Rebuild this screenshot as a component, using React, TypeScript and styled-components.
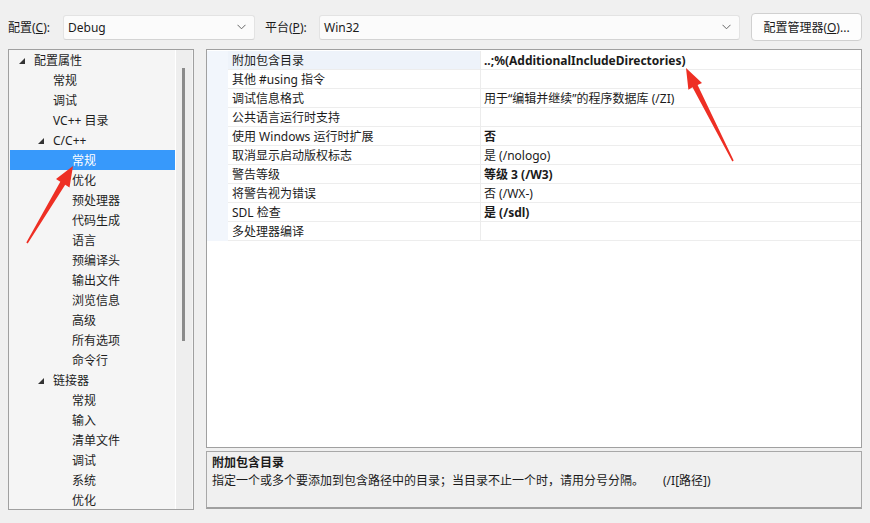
import React from "react";
import styled, { createGlobalStyle } from "styled-components";

const Global = createGlobalStyle`
  html, body { margin: 0; padding: 0; background: #f0f0f0; }
  body { font-family: "Noto Sans", "Noto Sans CJK SC", sans-serif; font-size: 12px; color: #1b1b1b; }
  * { box-sizing: border-box; }
`;

const Page = styled.div`
  position: relative;
  width: 870px;
  height: 523px;
  padding: 13px 8px 0 8px;
  display: flex;
  flex-direction: column;
  overflow: hidden;
`;

const TopBar = styled.div`
  display: flex;
  align-items: center;
  height: 28px;
`;

const Label = styled.div<{ $w: number; $ml?: number }>`
  width: ${(p) => p.$w}px;
  margin-left: ${(p) => p.$ml ?? 0}px;
  white-space: nowrap;
  font-size: 12px;
`;

const Select = styled.div<{ $w: number }>`
  width: ${(p) => p.$w}px;
  height: 25px;
  background: #fbfbfb;
  border: 1px solid #e3e3e3;
  border-bottom-color: #d4d4d4;
  border-radius: 3px;
  display: flex;
  align-items: center;
  justify-content: space-between;
  padding: 0 8px 0 4px;
  font-size: 12px;
`;

const Button = styled.div`
  width: 111px;
  height: 28px;
  margin-left: 11px;
  background: #fdfdfd;
  border: 1px solid #d0d0d0;
  border-radius: 4px;
  display: flex;
  align-items: center;
  justify-content: center;
  font-size: 12px;
  white-space: nowrap;
`;

const Main = styled.div`
  display: flex;
  margin-top: 8px;
  gap: 12px;
  height: 461px;
`;

const TreePanel = styled.div`
  width: 186px;
  height: 461px;
  border: 1px solid #a0a0a0;
  display: flex;
  background: #f5f5f5;
`;

const TreeArea = styled.div`
  width: 167px;
  overflow: hidden;
  display: flex;
  flex-direction: column;
  border-right: 1px solid #ffffff;
`;

const TreeRow = styled.div<{ $pad: number; $sel?: boolean }>`
  height: 20px;
  flex: none;
  margin-left: 1px;
  display: flex;
  align-items: center;
  padding-left: ${(p) => p.$pad}px;
  background: ${(p) => (p.$sel ? "#3799fb" : "transparent")};
  color: ${(p) => (p.$sel ? "#ffffff" : "#1e1e1e")};
  white-space: nowrap;
`;

const Expander = styled.span<{ $show: boolean }>`
  width: 15px;
  height: 20px;
  flex: none;
  display: flex;
  align-items: center;
  &::before {
    content: "";
    display: ${(p) => (p.$show ? "block" : "none")};
    width: 0;
    height: 0;
    margin-top: 1px;
    border-style: solid;
    border-width: 0 0 6px 6px;
    border-color: transparent transparent #333 transparent;
  }
`;

const ScrollTrack = styled.div`
  width: 16px;
  background: #eeeeee;
  padding: 18px 0 0 6px;
`;

const Thumb = styled.div`
  width: 3px;
  height: 273px;
  background: #8b8b8b;
`;

const RightCol = styled.div`
  width: 656px;
  display: flex;
  flex-direction: column;
  gap: 3px;
`;

const Grid = styled.div`
  height: 399px;
  border: 1px solid #a0a0a0;
  background: #ffffff;
  padding-top: 1px;
  display: flex;
  flex-direction: column;
`;

const GridRow = styled.div`
  display: grid;
  grid-template-columns: 21px 253px 1fr;
  height: 19px;
`;

const Gutter = styled.div`
  background: #f2f6fc;
`;

const NameCell = styled.div<{ $sel?: boolean }>`
  background: ${(p) => (p.$sel ? "#eef3fa" : "#ffffff")};
  border-right: 1px solid #ececec;
  border-bottom: 1px solid #ededed;
  padding-left: 4px;
  display: flex;
  align-items: center;
  white-space: nowrap;
`;

const ValueCell = styled.div<{ $bold?: boolean }>`
  border-bottom: 1px solid #ededed;
  padding-left: 3px;
  display: flex;
  align-items: center;
  white-space: nowrap;
  font-weight: ${(p) => (p.$bold ? 700 : 400)};
`;

const Desc = styled.div`
  height: 58px;
  border: 1px solid #a8a8a8;
  border-bottom: 2px solid #a0a0a0;
  background: #f0f0f0;
  padding: 2px 5px 0 5px;
  display: flex;
  flex-direction: column;
  line-height: 18px;
`;

const DescTitle = styled.div`
  font-weight: 700;
`;

const DescText = styled.div`
  white-space: nowrap;
`;

const Switch = styled.span`
  margin-left: 19px;
`;

const Overlay = styled.svg`
  position: absolute;
  left: 0;
  top: 0;
  pointer-events: none;
`;

const Chevron = () => (
  <svg width="9" height="6" viewBox="0 0 9 6">
    <polyline points="0.5,0.8 4.5,4.8 8.5,0.8" fill="none" stroke="#666" strokeWidth="1" />
  </svg>
);

type TreeItem = { label: string; level: number; exp?: boolean; sel?: boolean };

const tree: TreeItem[] = [
  { label: "配置属性", level: 0, exp: true },
  { label: "常规", level: 1 },
  { label: "调试", level: 1 },
  { label: "VC++ 目录", level: 1 },
  { label: "C/C++", level: 1, exp: true },
  { label: "常规", level: 2, sel: true },
  { label: "优化", level: 2 },
  { label: "预处理器", level: 2 },
  { label: "代码生成", level: 2 },
  { label: "语言", level: 2 },
  { label: "预编译头", level: 2 },
  { label: "输出文件", level: 2 },
  { label: "浏览信息", level: 2 },
  { label: "高级", level: 2 },
  { label: "所有选项", level: 2 },
  { label: "命令行", level: 2 },
  { label: "链接器", level: 1, exp: true },
  { label: "常规", level: 2 },
  { label: "输入", level: 2 },
  { label: "清单文件", level: 2 },
  { label: "调试", level: 2 },
  { label: "系统", level: 2 },
  { label: "优化", level: 2 },
];

type Prop = { name: string; value: string; bold?: boolean; sel?: boolean };

const props: Prop[] = [
  { name: "附加包含目录", value: "..;%(AdditionalIncludeDirectories)", bold: true, sel: true },
  { name: "其他 #using 指令", value: "" },
  { name: "调试信息格式", value: "用于“编辑并继续”的程序数据库 (/ZI)" },
  { name: "公共语言运行时支持", value: "" },
  { name: "使用 Windows 运行时扩展", value: "否", bold: true },
  { name: "取消显示启动版权标志", value: "是 (/nologo)" },
  { name: "警告等级", value: "等级 3 (/W3)", bold: true },
  { name: "将警告视为错误", value: "否 (/WX-)" },
  { name: "SDL 检查", value: "是 (/sdl)", bold: true },
  { name: "多处理器编译", value: "" },
];

export default function App() {
  return (
    <Page>
      <Global />
      <TopBar>
        <Label $w={55}>
          配置(<u>C</u>):
        </Label>
        <Select $w={192}>
          <span>Debug</span>
          <Chevron />
        </Select>
        <Label $w={54} $ml={10}>
          平台(<u>P</u>):
        </Label>
        <Select $w={421}>
          <span>Win32</span>
          <Chevron />
        </Select>
        <Button>
          配置管理器(<u>O</u>)...
        </Button>
      </TopBar>
      <Main>
        <TreePanel>
          <TreeArea>
            {tree.map((t, i) => (
              <TreeRow key={i} $pad={9 + t.level * 19} $sel={t.sel}>
                <Expander $show={!!t.exp} />
                {t.label}
              </TreeRow>
            ))}
          </TreeArea>
          <ScrollTrack>
            <Thumb />
          </ScrollTrack>
        </TreePanel>
        <RightCol>
          <Grid>
            {props.map((p, i) => (
              <GridRow key={i}>
                <Gutter />
                <NameCell $sel={p.sel}>{p.name}</NameCell>
                <ValueCell $bold={p.bold}>{p.value}</ValueCell>
              </GridRow>
            ))}
          </Grid>
          <Desc>
            <DescTitle>附加包含目录</DescTitle>
            <DescText>
              指定一个或多个要添加到包含路径中的目录；当目录不止一个时，请用分号分隔。
              <Switch>(/I[路径])</Switch>
            </DescText>
          </Desc>
        </RightCol>
      </Main>
      <Overlay width="870" height="523" viewBox="0 0 870 523">
        <polygon
          fill="#ee2f24"
          points="73,166 69.5,187.5 65.2,184.8 27.7,243.4 26.3,242.6 60.3,181.7 56,179"
        />
        <polygon
          fill="#ee2f24"
          points="686,68 702,83 697.6,84.9 733.7,160.6 732.3,161.4 692.5,87.2 688.4,89.8"
        />
      </Overlay>
    </Page>
  );
}
